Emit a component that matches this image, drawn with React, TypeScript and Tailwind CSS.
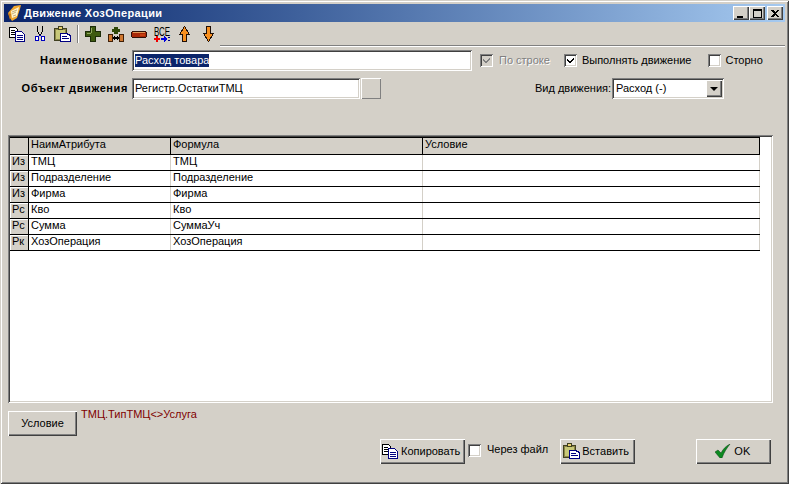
import React from "react";

const raised = "shadow-[inset_1px_1px_0_#ffffff,inset_-1px_-1px_0_#404040,inset_-2px_-2px_0_#808080]";
const sunken = "shadow-[inset_1px_1px_0_#808080,inset_-1px_-1px_0_#ffffff,inset_2px_2px_0_#404040,inset_-2px_-2px_0_#d4d0c8]";

const CopyIcon = () => (
  <svg width="16" height="15" viewBox="0 0 16 15" shapeRendering="crispEdges" className="shrink-0">
    <path d="M0.5 0.5h6l2 2v8h-8z" fill="#fff" stroke="#000" />
    <path d="M2 3h4M2 5h4M2 7h4" stroke="#000" />
    <path d="M6.5 4.500h6l3 3v7h-9z" fill="#fff" stroke="#000080" />
    <path d="M8 8h6M8 10h6M8 12h6" stroke="#000080" />
  </svg>
);
const CutIcon = () => (
  <svg width="10" height="16" viewBox="0 0 10 16" shapeRendering="crispEdges">
    <path d="M2.5 0v5l2 4M7.500 0v5l-2 4" fill="none" stroke="#000" />
    <rect x="0.5" y="10.5" width="3" height="4" fill="#fff" stroke="#0000c0" />
    <rect x="6.5" y="10.5" width="3" height="4" fill="#fff" stroke="#0000c0" />
    <path d="M4 9h2v1H4z" fill="#0000c0" />
  </svg>
);
const PasteIcon = () => (
  <svg width="17" height="16" viewBox="0 0 17 16" shapeRendering="crispEdges" className="shrink-0">
    <rect x="0.5" y="2.5" width="12" height="12" fill="#8c8648" stroke="#404020" />
    <rect x="2" y="4" width="9" height="9" fill="#c8c878" />
    <rect x="4.500" y="0.5" width="4" height="3" fill="#e8d070" stroke="#404020" />
    <path d="M6.500 7.500h6l3 1.500 1 1v5h-10z" fill="#fff" stroke="#000080" strokeWidth="1" />
    <path d="M8 10h5M8 12h7" stroke="#000080" />
  </svg>
);
const PlusIcon = () => (
  <svg width="16" height="16" viewBox="0 0 16 16" shapeRendering="crispEdges">
    <path d="M5.500 0.500h5v5h5v5h-5v5h-5v-5h-5v-5h5z" fill="#3f5a10" stroke="#1c2c08" />
    <path d="M2 7h4v1H2zM6 2h1v5H6z" fill="#90a860" />
  </svg>
);
const InsertIcon = () => (
  <svg width="16" height="16" viewBox="0 0 16 16" shapeRendering="crispEdges">
    <path d="M6 0.500h4v2h2v3H10v2H6v-2H4v-3h2z" fill="#304808" />
    <rect x="0.5" y="8.5" width="4" height="7" fill="#d07830" stroke="#402008" />
    <rect x="11.5" y="8.5" width="4" height="7" fill="#d07830" stroke="#402008" />
    <path d="M5 11h6v2H5z" fill="#000" />
    <path d="M6 10h1v4H6zM9 10h1v4H9z" fill="#000" />
  </svg>
);
const MinusIcon = () => (
  <svg width="16" height="7" viewBox="0 0 16 7" shapeRendering="crispEdges">
    <path d="M1 0h14v1h1v5h-1v1H1v-1H0V1h1z" fill="#301008" />
    <rect x="1" y="1" width="14" height="5" fill="#a82808" />
    <path d="M2 1h12v1H2z" fill="#e09858" />
    <path d="M9 3h5v2H9z" fill="#c84010" />
  </svg>
);
const AllIcon = () => (
  <svg width="17" height="20" viewBox="0 -2 17 20">
    <text transform="translate(0 9.500) scale(1 1.600)" fontSize="8" fill="#000" fontFamily="'Liberation Sans', sans-serif">ВСЕ</text>
    <g shapeRendering="crispEdges">
      <path d="M0 12h6v2H0zM2 10h2v6H2z" fill="#f00000" />
      <path d="M7 12h5v2H7zM10 10h1v6h-1zM11 11h1v4h-1zM12 12h1v2h-1z" fill="#0000e0" />
      <path d="M14 11h2v1h-2zM14 14h2v1h-2z" fill="#000080" />
    </g>
  </svg>
);
const UpIcon = () => (
  <svg width="11" height="16" viewBox="0 0 11 16" shapeRendering="crispEdges">
    <path d="M5.500 0.500l5 8h-3v7h-4v-7h-3z" fill="#f89020" stroke="#201008" />
  </svg>
);
const DownIcon = () => (
  <svg width="11" height="16" viewBox="0 0 11 16" shapeRendering="crispEdges">
    <path d="M3.500 0.500h4v7h3l-5 8-5-8h3z" fill="#f89020" stroke="#201008" />
  </svg>
);
const TitleIcon = () => (
  <svg width="15" height="17" viewBox="0 0 15 17" className="shrink-0">
    <path d="M1 8l6-7 7-1-1 4-3 9-5 3-2-3z" fill="#f0a830" />
    <path d="M4 6l8-4-2 9-5 2z" fill="#fff4d0" />
    <path d="M5 7l5-2M5 9l4-2M6 11l3-1" stroke="#b09050" strokeWidth="0.7" />
    <path d="M1 8l3 1-1 6z" fill="#c87818" />
  </svg>
);
const OkIcon = () => (
  <svg width="16" height="14" viewBox="0 0 16 14" className="shrink-0">
    <path d="M0 8l3-2 3 3c2-4 5-7 9-9-3 4-6 8-8 14H5z" fill="#0c8a20" stroke="#064010" strokeWidth="0.5" />
  </svg>
);
const Check = ({ color }: { color: string }) => (
  <svg width="9" height="9" viewBox="0 0 9 9" shapeRendering="crispEdges">
    <path d="M8 1v2L4 7H3L1 5V3l2 2h1z" fill={color} />
  </svg>
);

const Checkbox = ({ checked, disabled }: { checked?: boolean; disabled?: boolean }) => (
  <span className={`flex h-[13px] w-[13px] shrink-0 items-center justify-center ${disabled ? "bg-[#d4d0c8]" : "bg-white"} ${sunken}`}>
    {checked && <Check color={disabled ? "#808080" : "#000"} />}
  </span>
);

const rows = [
  ["Из", "ТМЦ", "ТМЦ"],
  ["Из", "Подразделение", "Подразделение"],
  ["Из", "Фирма", "Фирма"],
  ["Рс", "Кво", "Кво"],
  ["Рс", "Сумма", "СуммаУч"],
  ["Рк", "ХозОперация", "ХозОперация"],
];

export default function App() {
  return (
    <div className="flex h-[484px] w-[789px] flex-col overflow-hidden bg-[#d4d0c8] p-1 font-['Liberation_Sans',sans-serif] text-[11px] leading-[13px] text-black shadow-[inset_1px_1px_0_#d4d0c8,inset_-1px_-1px_0_#404040,inset_2px_2px_0_#ffffff,inset_-2px_-2px_0_#808080]">
      {/* title bar */}
      <div className="flex h-[18px] shrink-0 items-center bg-gradient-to-r from-[#0a246a] to-[#a6caf0] pl-[3px] pr-[2px]">
        <TitleIcon />
        <span className="ml-[2px] flex-1 text-[11px] font-bold tracking-[0.35px] text-white">Движение ХозОперации</span>
        {["min", "max", "close"].map((k) => (
          <span key={k} className={`${k === "close" ? "ml-[2px]" : ""} flex h-[14px] w-[16px] items-center justify-center bg-[#d4d0c8] ${raised}`}>
            {k === "min" && <span className="mt-[7px] mr-[2px] h-[2px] w-[6px] bg-black" />}
            {k === "max" && <span className="h-[9px] w-[9px] border border-t-2 border-black" />}
            {k === "close" && (
              <svg width="8" height="7" viewBox="0 0 8 7" shapeRendering="crispEdges">
                <path d="M0 0h2l2 2 2-2h2L5 3.500l3 3.500H6L4 5 2 7H0l3-3.500z" fill="#000" />
              </svg>
            )}
          </span>
        ))}
      </div>

      {/* toolbar */}
      <div className="flex h-[24px] shrink-0 items-center pl-[5px]">
        <span className="flex w-[25px] shrink-0"><CopyIcon /></span>
        <span className="flex w-[20px] shrink-0 pl-[1px]"><CutIcon /></span>
        <span className="flex w-[23px] shrink-0"><PasteIcon /></span>
        <span className="h-[18px] w-[2px] shrink-0 border-x border-l-[#808080] border-r-white" />
        <span className="ml-[6px] flex w-[23px] shrink-0"><PlusIcon /></span>
        <span className="flex w-[23px] shrink-0"><InsertIcon /></span>
        <span className="flex w-[23px] shrink-0"><MinusIcon /></span>
        <span className="flex w-[25px] shrink-0"><AllIcon /></span>
        <span className="flex w-[24px] shrink-0"><UpIcon /></span>
        <span className="flex w-[11px] shrink-0"><DownIcon /></span>
        <span className="mt-[23px] ml-[6px] h-[2px] flex-1 border-y border-t-[#808080] border-b-white" />
      </div>

      {/* form rows */}
      <div className="ml-[13px] mt-[4px] flex h-[21px] shrink-0 items-center">
        <span className="w-[111px] whitespace-nowrap text-right font-bold tracking-[0.6px]">Наименование</span>
        <span className={`ml-[4px] flex h-[21px] w-[340px] items-center bg-white pl-[3px] ${sunken}`}>
          <span className="bg-[#0a246a] text-white">Расход товара</span>
        </span>
        <span className="ml-[8px]"><Checkbox checked disabled /></span>
        <span className="ml-[6px] text-[#808080] [text-shadow:1px_1px_0_#fff]">По строке</span>
        <span className="ml-[14px]"><Checkbox checked /></span>
        <span className="ml-[5px]">Выполнять движение</span>
        <span className="ml-[16px]"><Checkbox /></span>
        <span className="ml-[5px]">Сторно</span>
      </div>
      <div className="ml-[13px] mt-[7px] flex h-[21px] shrink-0 items-center">
        <span className="w-[111px] whitespace-nowrap text-right font-bold tracking-[0.6px]">Объект движения</span>
        <span className={`ml-[4px] flex h-[21px] w-[228px] items-center bg-white pl-[3px] ${sunken}`}>Регистр.ОстаткиТМЦ</span>
        <span className={`ml-px h-[21px] w-[20px] bg-[#d4d0c8] shadow-[inset_1px_1px_0_#ffffff,inset_-1px_-1px_0_#808080]`} />
        <span className="ml-[154px] w-[74px] whitespace-nowrap text-right">Вид движения:</span>
        <span className={`ml-[3px] flex h-[21px] w-[112px] items-center justify-between bg-white pl-[4px] pr-[2px] ${sunken}`}>
          Расход (-)
          <span className={`flex h-[17px] w-[16px] items-center justify-center bg-[#d4d0c8] ${raised}`}>
            <span className="h-0 w-0 border-x-[4px] border-t-[4px] border-x-transparent border-t-black" />
          </span>
        </span>
      </div>

      {/* grid */}
      <div className={`ml-[4px] mr-[12px] mt-[36px] flex-1 bg-white p-[2px] ${sunken}`}>
        <div className="w-[750px] border-t border-black">
          <div className="flex h-[16px] bg-[#d4d0c8]">
            <span className="w-[19px] shrink-0 border-r border-black" />
            <span className="w-[142px] shrink-0 border-r border-black pl-[2px]">НаимАтрибута</span>
            <span className="w-[252px] shrink-0 border-r border-black pl-[2px]">Формула</span>
            <span className="flex-1 border-r border-black pl-[2px]">Условие</span>
          </div>
          {rows.map((r, i) => (
            <div key={i} className="flex h-[16px] border-t border-black">
              <span className={`w-[19px] shrink-0 border-r border-black bg-[#d4d0c8] pl-[2px] shadow-[inset_1px_1px_0_#fff]`}>{r[0]}</span>
              <span className="w-[142px] shrink-0 border-r border-[#d4d0c8] pl-[2px]">{r[1]}</span>
              <span className="w-[252px] shrink-0 border-r border-[#d4d0c8] pl-[2px]">{r[2]}</span>
              <span className="flex-1 border-r border-[#d4d0c8]" />
            </div>
          ))}
          <div className="h-px bg-black" />
        </div>
      </div>

      {/* condition */}
      <div className="ml-[4px] mt-[5px] flex h-[28px] shrink-0 items-start">
        <button className={`mt-[3px] h-[25px] w-[69px] bg-[#d4d0c8] pb-[1px] ${raised}`}>Условие</button>
        <span className="ml-[4px] text-[#800000]">ТМЦ.ТипТМЦ&lt;&gt;Услуга</span>
      </div>

      {/* bottom buttons */}
      <div className="mb-[17px] ml-[376px] mt-[3px] flex h-[24px] shrink-0 items-center">
        <button className={`flex h-[25px] w-[85px] items-center pl-[2px] gap-[3px] bg-[#d4d0c8] ${raised}`}><CopyIcon />Копировать</button>
        <span className="ml-[3px] -mt-[2px]"><Checkbox /></span>
        <span className="ml-[6px] -mt-[3px]">Через файл</span>
        <button className={`ml-[12px] flex h-[25px] w-[75px] items-center pl-[3px] gap-[2px] bg-[#d4d0c8] ${raised}`}><PasteIcon />Вставить</button>
        <button className={`ml-[61px] flex h-[25px] w-[75px] items-center justify-center pr-[2px] gap-[3px] bg-[#d4d0c8] ${raised}`}><OkIcon />OK</button>
      </div>
    </div>
  );
}
